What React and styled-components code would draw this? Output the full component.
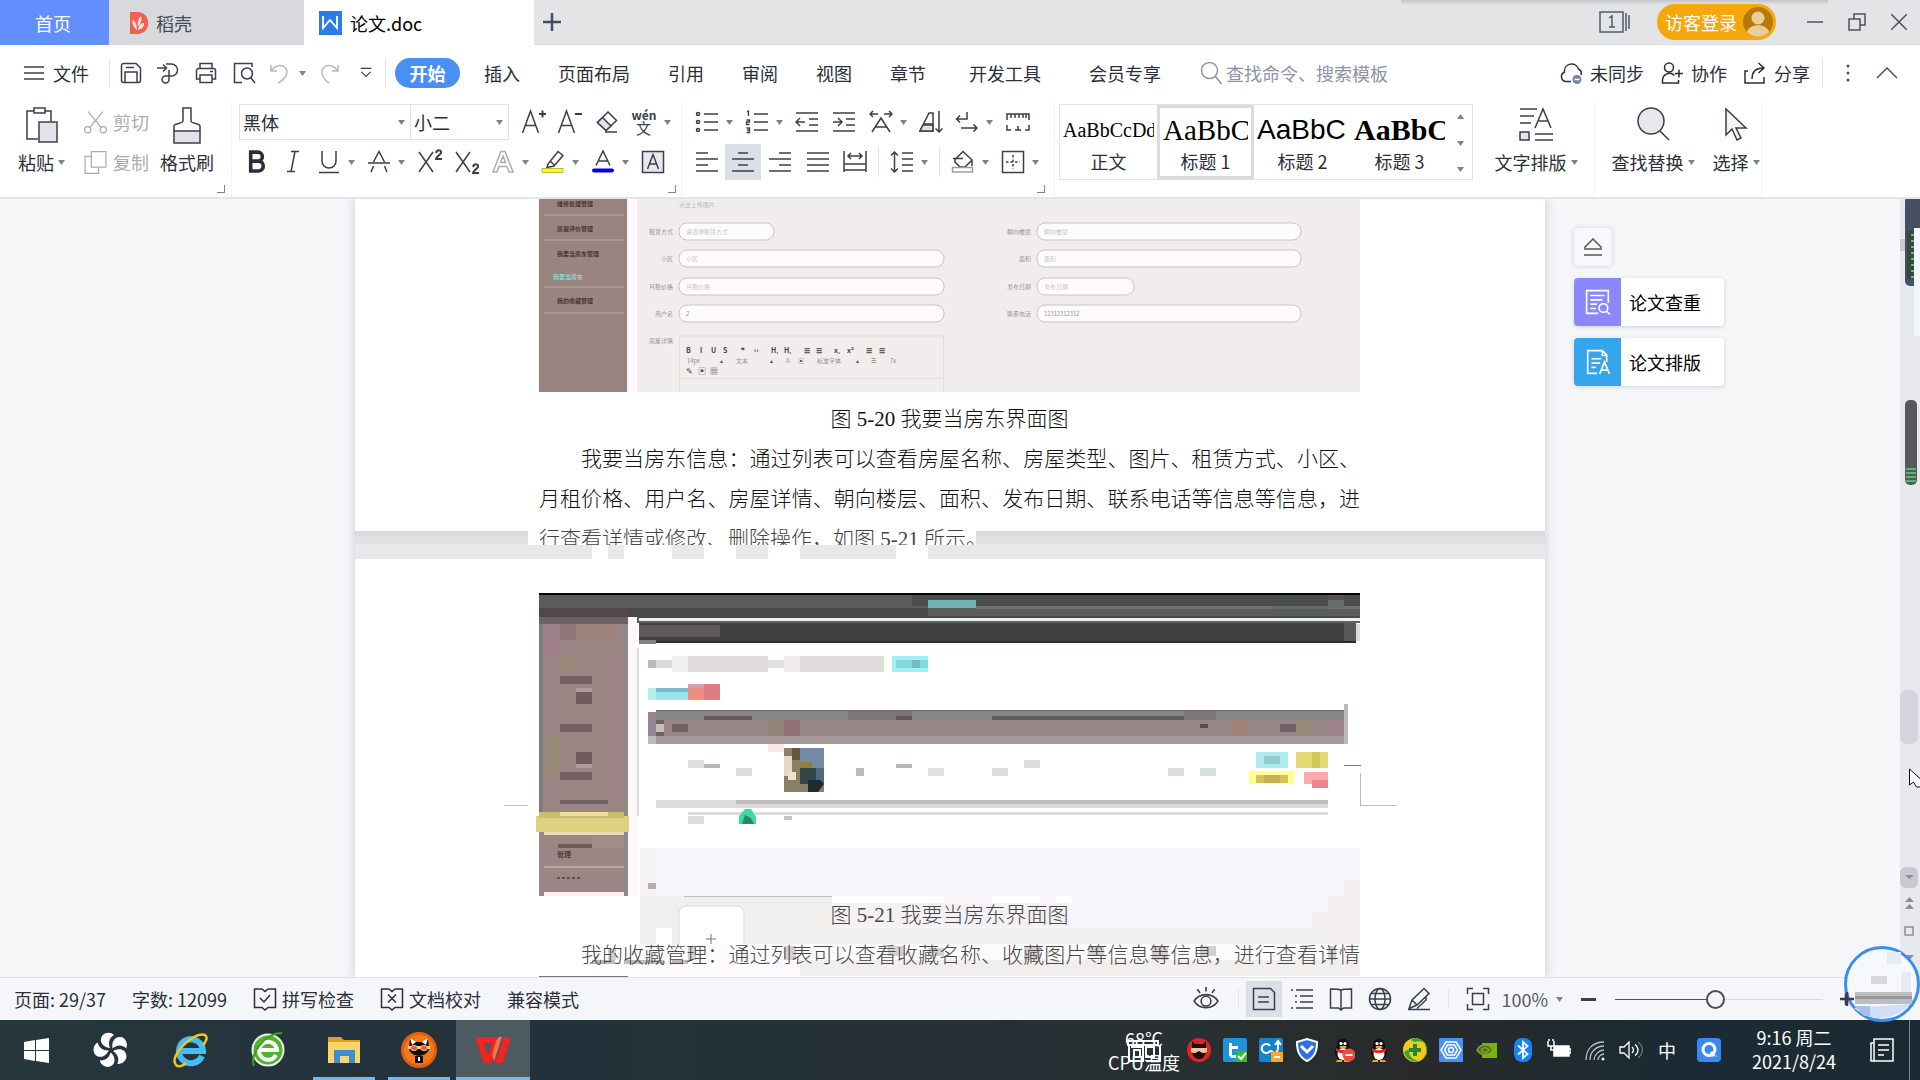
import React, {useState} from "react"
import styled, { createGlobalStyle } from "styled-components";

const Global = createGlobalStyle`
  * { box-sizing: border-box; }
  html, body, #root { height: 100%; }
  body {
    margin: 0;
    overflow: hidden;
    font-family: "Noto Sans CJK SC", "Open Sans", sans-serif;
    font-size: 18px;
    color: #2b2f3a;
  }
  button, input, select {
    font: inherit;
    color: inherit;
    border: 0;
    padding: 0;
    margin: 0;
    background: none;
    outline: none;
  }
  svg { display: block; flex: none; }
`
const Janela = styled.div`
    display: flex;
    flex-direction: column;
    height: 100vh;
    background: #fff;
    line-height: 24px;
    white-space: nowrap;
`

/* title bar */
const TitleBar = styled.header`
    display: flex;
    height: 45px;
    background: #e2e4e6;
    border-bottom: 1px solid #dcdee0;
`
const Tab = styled.button`
    display: flex;
    align-items: center;
    gap: 8px;
    height: 45px;
    padding: 0 0 0 ${p => p.$pad}px;
    width: ${p => p.$w}px;
    background: ${p => p.$bg};
    color: ${p => p.$color || "#20242e"};
`
const NewTab = styled.button`
    display: flex;
    align-items: center;
    padding: 0 9px;
`
const TitleRight = styled.div`
    display: flex;
    align-items: center;
    margin-left: auto;
    height: 44px;
    background: linear-gradient(#c4c5c7, #e2e4e600) 0 0 / 427px 5px no-repeat;
    padding-left: 198px;
`
const Login = styled.button`
    display: flex;
    align-items: center;
    gap: 6px;
    height: 36px;
    padding: 0 3px 0 8px;
    margin: 0 18px 0 27px;
    border-radius: 18px;
    background: #f5a80c;
    color: #fff;
`
const WinButton = styled.button`
    display: flex;
    align-items: center;
    justify-content: center;
    width: 42px;
    height: 44px;
`

/* menu bar */
const MenuBar = styled.nav`
    display: flex;
    align-items: center;
    height: 56px;
    flex: none;
`
const Slot = styled.button`
    display: flex;
    align-items: center;
    justify-content: center;
    gap: 7px;
    width: ${p => p.$w}px;
    height: 36px;
    background: ${p => p.$on ? "#dcdfe6" : "none"};
    color: #3a3f4b;
`
const FileButton = styled.button`
    display: flex;
    align-items: center;
    gap: 9px;
    padding: 0 17px 0 24px;
`
const Line = styled.span`
    width: 1px;
    height: ${p => p.$h || 30}px;
    margin: 0 ${p => p.$m || 0}px;
    background: #e4e6ea;
`
const MenuTab = styled.button`
    padding: 0 ${p => p.$wide ? 24 : 19}px;
`
const ActiveTab = styled.button`
    width: 65px;
    height: 30px;
    margin: 0 5px 0 9px;
    border-radius: 15px;
    background: #4a90f2;
    color: #fff;
    font-weight: bold;
`
const Search = styled.label`
    display: flex;
    align-items: center;
    gap: 3px;
    margin-left: 14px;
    color: #8d93a5;
    input { width: 190px; }
    input::placeholder { color: #8d93a5; opacity: 1; }
`
const MenuRight = styled.div`
    display: flex;
    align-items: center;
    gap: 16px;
    margin-left: auto;
`
const IconText = styled.button`
    display: flex;
    align-items: center;
    gap: ${p => p.$tight ? 5 : 7}px;
`
const MenuEnd = styled.div`
    display: flex;
    align-items: center;
    padding: 0 19px 0 12px;
`

/* ribbon */
const Ribbon = styled.section`
    display: flex;
    flex: none;
    height: 98px;
    padding-top: 1px;
    border-bottom: 2px solid #e4e5e8;
`
const Group = styled.div`
    display: flex;
    flex-direction: column;
    padding: 0 ${p => p.$right || 0}px 0 ${p => p.$left || 0}px;
    border-right: 1px solid #f1f2f4;
`
const Row = styled.div`
    display: flex;
    align-items: center;
    height: 40px;
`
const Launcher = styled.button`
    align-self: flex-end;
    width: 8px;
    height: 8px;
    margin-top: 3px;
    border-right: 1px solid #7d828c;
    border-bottom: 1px solid #7d828c;
`
const BigRow = styled.div`
    display: flex;
    height: 80px;
`
const Big = styled.button`
    display: flex;
    flex-direction: column;
    align-items: center;
    justify-content: space-between;
    width: ${p => p.$w}px;
    height: 72px;
    padding-top: 5px;
`
const BigLabel = styled.span`
    display: flex;
    align-items: center;
    gap: 4px;
`
const Faded = styled.button`
    display: flex;
    align-items: center;
    gap: 5px;
    height: 40px;
    color: #a9acb3;
`
const Combo = styled.span`
    display: flex;
    align-items: center;
    width: ${p => p.$w}px;
    height: 36px;
    padding: 0 5px 0 3px;
    border: 1px solid #dfe1e5;
    border-left-width: ${p => p.$first ? 1 : 0}px;
    select {
        flex: 1;
        appearance: none;
    }
`
const Gallery = styled.div`
    display: flex;
    height: 76px;
    margin: 2px 0 0 4px;
    border: 1px solid #e1e3e7;
`
const StyleCell = styled.button`
    display: flex;
    flex-direction: column;
    justify-content: flex-end;
    align-items: center;
    width: 97px;
    overflow: hidden;
    padding: 0 3px;
    border: 3px solid ${p => p.$on ? "#d9dbdf" : "transparent"};
    border-width: ${p => p.$on ? 3 : 0}px;
    padding-bottom: ${p => p.$on ? 3 : 6}px;
`
const Preview = styled.span`
    align-self: flex-start;
    color: #000;
    font-family: ${p => p.$sans ? '"Liberation Sans"' : '"Liberation Serif"'}, sans-serif;
    font-size: ${p => p.$size}px;
    font-weight: ${p => p.$bold ? "bold" : "normal"};
    line-height: 38px;
    width: 100%;
    overflow: hidden;
    text-align: left;
`
const GalleryArrows = styled.div`
    display: flex;
    flex-direction: column;
    justify-content: space-between;
    align-items: center;
    width: 24px;
    padding: 9px 0 7px;
`

/* document area */
const Workspace = styled.main`
    flex: 1;
    min-height: 0;
    display: grid;
    grid-template-columns: 1fr 1190px 1fr 20px;
    background: #f5f6f8;
    overflow: hidden;
`
const Pages = styled.div`
    grid-column: 2;
    display: flex;
    flex-direction: column;
    min-height: 0;
    box-shadow: 0 0 10px #c9cbd0;
    background: #e5e7e9;
`
const Page = styled.article`
    height: ${p => p.$h ? p.$h + "px" : "auto"};
    flex: ${p => p.$h ? "none" : 1};
    padding: 0 185px 0 184px;
    background: #fff;
    color: #111;
    font-family: "Liberation Serif", "Noto Sans CJK SC", serif;
    font-weight: 300;
    font-size: 21px;
    line-height: 40px;
`
const Gap = styled.div`
    height: 28px;
    flex: none;
    background:
        linear-gradient(#fff, #fff) 237px 14px / 16px 14px no-repeat,
        linear-gradient(#fff, #fff) 269px 14px / 48px 14px no-repeat,
        linear-gradient(#fff, #fff) 349px 14px / 32px 14px no-repeat,
        linear-gradient(#fff, #fff) 413px 14px / 32px 14px no-repeat,
        linear-gradient(#fff, #fff) 541px 14px / 32px 14px no-repeat,
        linear-gradient(#d9dadd 0 5px, #dfe1e3 5px 13px, #e6e8ea 13px);
`
const Caption = styled.p`
    margin: 0;
    padding-top: ${p => p.$top || 0}px;
    text-align: center;
`
const Body = styled.p`
    margin: 0;
    text-indent: ${p => p.$indent ? 42 : 0}px;
    text-align: justify;
    text-align-last: justify;
`
const CutLine = styled.p`
    position: relative;
    margin: 0 0 0 -11px;
    padding-left: 11px;
    width: 448px;
    height: 26px;
    overflow: hidden;
    background: #fff;
    color: #444;
`
const Stack = styled.div`
    display: grid;
    > * { grid-area: 1 / 1; }
    > svg { overflow: visible; }
`
const Overlap = styled.div`
    padding-top: 336px;
    color: #4b4747;
`
const Patch = styled.span`
    background: #f3f1f3;
`
const Side = styled.aside`
    display: flex;
    flex-direction: column;
    align-items: flex-start;
    gap: 12px;
    padding: 29px 0 0 29px;
`
const Collapse = styled.button`
    display: flex;
    align-items: center;
    justify-content: center;
    width: 38px;
    height: 38px;
    background: #f7f8fa;
    border-radius: 4px;
    box-shadow: 0 0 4px #cfd1d5;
`
const SideCard = styled.button`
    display: flex;
    align-items: center;
    width: 150px;
    height: 48px;
    border-radius: 4px;
    overflow: hidden;
    background: #fff;
    color: #000;
    gap: 8px;
    box-shadow: 0 1px 4px #cfd1d5;
`
const SideIcon = styled.span`
    display: flex;
    align-items: center;
    justify-content: center;
    width: 47px;
    height: 48px;
    background: ${p => p.$bg};
`
const Track = styled.div`
    grid-column: 4;
    background: #e8e9ef;
    overflow: hidden;
`

/* status bar */
const Status = styled.footer`
    display: flex;
    align-items: center;
    flex: none;
    height: 43px;
    border-top: 1px solid #dfe2e6;
    background: #f5f6fa;
    gap: 26px;
    padding-left: 14px;
`
const StatusRight = styled.div`
    display: flex;
    align-items: center;
    margin-left: auto;
    padding-right: 68px;
`
const Zoom = styled.input`
    appearance: none;
    width: 208px;
    height: 20px;
    margin: 0 17px 0 2px;
    background: linear-gradient(90deg, #4a4f5a 48%, #d5d8dd 48%) 0 10px / 100% 1px no-repeat;
    &::-webkit-slider-thumb {
        appearance: none;
        width: 19px;
        height: 19px;
        border: 2px solid #4a4f5a;
        border-radius: 50%;
        background: #f3f4f6;
    }
`
const Percent = styled.span`
    color: #555a6b;
    margin: 0 8px 0 4px;
`
const FloatBall = styled.div`
    position: absolute;
    right: 0;
    bottom: 58px;
`

/* taskbar */
const Taskbar = styled.footer`
    display: flex;
    flex: none;
    height: 60px;
    background: linear-gradient(90deg, #26363d, #23323a 30%, #283032 62%, #282a2a 74%, #1c2b33 86%);
    color: #fff;
`
const Task = styled.button`
    display: flex;
    align-items: center;
    justify-content: center;
    width: ${p => p.$w}px;
    background: ${p => p.$on ? "#4d5a61" : "none"};
    background-image: ${p => p.$open ? "linear-gradient(#78b7ea, #78b7ea)" : "none"};
    background-size: ${p => p.$on ? "100%" : "62px"} 3px;
    background-position: bottom;
    background-repeat: no-repeat;
`
const Tray = styled.div`
    display: flex;
    align-items: stretch;
    margin-left: auto;
`
const Temp = styled.button`
    display: grid;
    width: 74px;
    justify-items: center;
    align-items: center;
    color: #fff;
    > * { grid-area: 1 / 1; }
`
const Clock = styled.button`
    width: 122px;
    color: #fff;
    line-height: 24px;
    padding-bottom: 2px;
`
const Edge = styled.span`
    width: 11px;
    border-left: 1px solid #7d878c;
`

const Icon = ({ s = 24, w = 1.5, c = "currentColor", children }) => (
    <svg width={s} height={s} viewBox="0 0 24 24" fill="none" stroke={c} strokeWidth={w} aria-hidden="true">
        {children}
    </svg>
)
const Caret = ({ up }) => (
    <svg width="7" height="5" viewBox="0 0 7 5" aria-hidden="true">
        <path d={up ? "M0 5h7L3.500 0z" : "M0 0h7L3.500 5z"} fill="#7d828c" />
    </svg>
)

const ic = {
    save: <Icon><path d="M2.500 4.500a2 2 0 0 1 2-2H17l4.500 4.500v12.500a2 2 0 0 1-2 2h-15a2 2 0 0 1-2-2zM6 21.500V11h12v10.500M7 6.500h8" /></Icon>,
    output: <Icon><path d="M1 7h9M7 3.500 10.500 7 7 10.500M10 3h5.500a6 6 0 0 1 0 12H9.500a3.500 3.500 0 1 0 3.500 3.500V9" /></Icon>,
    print: <Icon><path d="M6 7V2.500h12V7M6 18H2.500V9.500a2 2 0 0 1 2-2h15a2 2 0 0 1 2 2V18H18M6 14h12v7.500H6zM16 10.500h3" /></Icon>,
    preview: <Icon><path d="M10 21.500H2.500v-19H20V6M19 17l4 5" /><circle cx="15" cy="12.500" r="5.500" /></Icon>,
    undo: <Icon c="#b5b8be"><path d="M3 4v6h6M3.500 10C6 5 13 2.500 17 6.500S19 17 10 22" /></Icon>,
    redo: <Icon c="#b5b8be"><path d="M21 4v6h-6M20.500 10C18 5 11 2.500 7 6.500S5 17 12 22" /></Icon>,
    more: <Icon s={14} w={2}><path d="M3 4h18M4 10l8 8 8-8" /></Icon>,
    cut: <Icon s={25} w={1.2}><path d="M5 1.500 17.500 17M19 1.500 6.500 17" /><circle cx="4.500" cy="19" r="3" /><circle cx="19.500" cy="19" r="3" /></Icon>,
    copy: <Icon s={25} w={1.2}><path d="M8 1.500h14v15H8z" /><path d="M8 6H2v16.500h13v-6" /></Icon>,
    eraser: <Icon><path d="M2.500 12.500 13 2l8.500 8.500L11 20.500z" fill="#fff" /><path d="M2.500 12.500 7.500 7.500l8.500 8.500-5 4.500z" fill="#e1e3e8" /><path d="M10 22h12" /></Icon>,
    bullets: <Icon><path d="M9 4h14M9 12h14M9 20h14" /><circle cx="3" cy="4" r="1.500" /><circle cx="3" cy="12" r="1.500" /><circle cx="3" cy="20" r="1.500" /></Icon>,
    numbers: <Icon><path d="M9 4h14M9 12h14M9 20h14" /><path d="M2 2l1.500-1v5M1.500 10h3v2h-3v2.500h3M1.500 18h3v4.500h-3M2 20h2.500" strokeWidth="1.300" /></Icon>,
    outdent: <Icon><path d="M1 3h22M14 9h9M14 15h9M1 21h22M1 12h9M5 8l-4 4 4 4" /></Icon>,
    indent: <Icon><path d="M1 3h22M14 9h9M14 15h9M1 21h22M1 12h9M6 8l4 4-4 4" /></Icon>,
    scale: <Icon><path d="M1 4h8M4 1 1 4l3 3M15 4h8M20 1l3 3-3 3M3 22l9-14 9 14M6.500 17h11" /></Icon>,
    sort: <Icon><path d="M1 21 10 3h4v18zM5 14h9" /><path d="M4 15h10v6H1z" fill="#e1e3e8" /><path d="M20 1v21M16.500 18.500 20 22l3.500-3.500" /></Icon>,
    wrap: <Icon><path d="M12 2v7H2M5 5.500 1.500 9 5 12.500M6 18h16M18.500 14.500 22 18l-3.500 3.500" /></Icon>,
    ruler: <Icon><path d="M1 10V4h22v6M5 4v4M9 4v4M13 4v4M17 4v4M20 4v4M1 15v5h4M23 15v5h-4M9 20h6M12 16v4" /></Icon>,
    left: <Icon><path d="M1 3h12M1 9h22M1 15h12M1 21h22" /></Icon>,
    center: <Icon><path d="M7 3h10M1 9h22M7 15h10M1 21h22" /></Icon>,
    right: <Icon><path d="M11 3h12M1 9h22M11 15h12M1 21h22" /></Icon>,
    justify: <Icon><path d="M1 3h22M1 9h22M1 15h22M1 21h22" /></Icon>,
    distribute: <Icon><path d="M1 1v21M23 1v21M5 6h14M8 3 5 6l3 3M16 3l3 3-3 3M1 14h22M1 20h22" /></Icon>,
    spacing: <Icon><path d="M4.500 2v20M1 5.500 4.500 2 8 5.500M1 18.500 4.500 22 8 18.500M12 3h11M12 9h11M12 15h11M12 21h11" /></Icon>,
    bucket: <Icon><path d="M4 9.500 12 1.500l9 8.500-7 7H9l-5-5zM2 8.500h10M21 10v6" /><path d="M1.500 17.500h20v4.500h-20z" stroke="#a79a9a" /></Icon>,
    border: <Icon><path d="M1.500 1.500h21v21h-21z" /><path d="M12 5v14M5 12h14" strokeDasharray="2.500 2" /></Icon>,
    under: <Icon><path d="M5 1v10a7 7 0 0 0 14 0V1M2 22.500h20" /></Icon>,
    italic: <Icon><path d="M10 1.500h8M6 21.500h8M14 1.500 10 21.500" /></Icon>,
    strike: <Icon><path d="M6.500 12 12 1.500 17.500 12M1 13h22M4 22l2.500-6M20 22l-2.500-6" /></Icon>,
    outline: <Icon c="#a9acb3"><path d="M2 22 10 1.500h4L22 22h-4l-2-5.500H8L6 22zM9.500 12.500h5L12 6z" /></Icon>,
    marker: <Icon><path d="M7 14 17 1.500l5 4L13 16l-7 1.500zM9 11l5 4.500" /><path d="M1 18.500h21v4H1z" fill="#ffff00" stroke="#a6a64a" strokeWidth=".8" /></Icon>,
    color: <Icon><path d="M5 15.500 12 1l7 14.500M7.500 11h9" /><path d="M3 20.500h18" stroke="#0000ee" strokeWidth="4" strokeLinecap="round" /></Icon>,
    boxed: <Icon><path d="M1.500 1.500h21v21h-21z" fill="#e6e8ec" /><path d="M6.500 19 12 4.500 17.500 19M8.500 14h7" /></Icon>,
    search: <Icon><circle cx="10.500" cy="9.500" r="8" /><path d="M16.500 15.500 22.500 23" /></Icon>,
    cloud: <Icon><path d="M12 20.500H6.500a5 5 0 0 1-1-9.500C4.500 2 17 0 19.500 8a5 5 0 0 1 2.500 6" /><circle cx="18" cy="18.500" r="4.500" fill="#7584a3" stroke="none" /><path d="M15.500 18.500h5" stroke="#fff" /></Icon>,
    person: <Icon><circle cx="9" cy="6.500" r="4.500" /><path d="M14.500 14.500A7 7 0 0 0 2.500 19v3h16v-3M19 8.500v8M15 12.500h8" /></Icon>,
    share: <Icon><path d="M9 18C9 10 13 7 20 7M15.500 2l5.500 5-5.500 5M5 10H2v12h19v-6" /></Icon>,
    eye: <Icon s={26}><path d="M1 14c5-8 17-8 22 0-5 8-17 8-22 0zM12 1v4M4 3l2.500 3.500M20 3l-2.500 3.500" /><circle cx="12" cy="14" r="4.500" /></Icon>,
    pageView: <Icon><path d="M1.500 1.500h17l4 4v17h-21zM6 10h11M6 15h11" /></Icon>,
    outlineView: <Icon><path d="M1 3h2M6 3h17M5 9h2M10 9h13M5 15h2M10 15h13M1 21h2M6 21h17" /></Icon>,
    book: <Icon><path d="M12 3.500C11 2 9 2 1.500 2v19h8l2.500 2 2.500-2h8V2C15 2 13 2 12 3.500zM12 4v18" /></Icon>,
    globe: <Icon><circle cx="12" cy="12" r="10.500" /><ellipse cx="12" cy="12" rx="5" ry="10.500" /><path d="M1.500 12h21M3.500 6.500h17M3.500 17.500h17" /></Icon>,
    pen: <Icon><path d="M2 21.500 5 13 17 1.500l5 5L10 18zM5 13l5 5M19 9v4l-9 8.500M1 22.500h22" /></Icon>,
    fit: <Icon><path d="M1.500 7V1.500H7M17 1.500h5.500V7M22.500 17v5.500H17M7 22.500H1.500V17M6.500 6.500h11v11h-11z" /></Icon>,
    spell: <Icon><path d="M9 2H1.500v18.500H9l3 2.500 3-2.500h7.500V2H15l-3 2.500zM7 11l4 4 6-7" /></Icon>,
    proof: <Icon><path d="M9 2H1.500v18.500H9l3 2.500 3-2.500h7.500V2H15l-3 2.500zM8 7.500l8 8M16 7.500l-8 8" /></Icon>,
}

// tools drawn as a big letter with a small mark at its corner
const LetterIcon = ({ d, mark }) => (
    <svg width="26" height="26" viewBox="0 0 26 26" fill="none" stroke="currentColor" strokeWidth="1.500" aria-hidden="true">
        <path d={d} /><path d={mark} strokeWidth="2" />
    </svg>
)
const bigA = "M1.500 24 9.500 2l8 22M4.500 16.500h10"
const bigX = "M2 3l14 20M16 3 2 23"

const Tool = ({ icon, w = 36, caret, on, label }) => (
    <Slot $w={w} $on={on} aria-label={label}>{icon}{caret && <Caret />}</Slot>
)

const campos = [
    ["租赁方式", 32, 134, 140, 95, "请选择租赁方式"],
    ["小区", 59, 134, 140, 265, "小区"],
    ["月租价格", 87, 134, 140, 265, "月租价格"],
    ["用户名", 114, 134, 140, 265, "2"],
    ["朝向楼层", 32, 492, 498, 264, "朝向楼层"],
    ["面积", 59, 492, 498, 264, "面积"],
    ["发布日期", 87, 492, 498, 97, "发布日期"],
    ["联系电话", 114, 492, 498, 264, "12312312312"],
]
const menu = [["维修处理管理", 7], ["房屋评价管理", 32], ["我要当房东管理", 57], ["我要当房东", 80], ["我的收藏管理", 104]]

function FormFigure() {
    return (
        <svg width="821" height="193" viewBox="0 0 821 193" fontFamily="Noto Sans CJK SC">
            <path d="M0 0h821v193H0z" fill="#f1eded" />
            <path d="M0 0h88v193H0z" fill="#998480" />
            <path d="M89 0h9v193h-9z" fill="#fbfbfd" />
            <path d="M5 16h80M5 41h80M5 88h80M5 114h80" stroke="#b7a5a2" />
            {menu.map(([t, y]) => (
                <text key={t} x={t === "我要当房东" ? 14 : 18} y={y} fontSize="6" fontWeight="bold" fill={t === "我要当房东" ? "#8ed3d3" : "#4a3735"}>{t}</text>
            ))}
            <text x="140" y="8" fontSize="6" fill="#999">点击上传图片</text>
            {campos.map(([t, y, end, x, w, v]) => (
                <g key={t} fontSize="6">
                    <text x={end} y={y + 3} textAnchor="end" fill="#666">{t}</text>
                    <rect x={x} y={y - 8} width={w} height="17" rx="8" fill="#fdfbfc" stroke="#c9c5c5" />
                    <text x={x + 7} y={y + 3} fill={/\d/.test(v) ? "#555" : "#aaa"}>{v}</text>
                </g>
            ))}
            <text x="134" y="144" fontSize="6" textAnchor="end" fill="#666">房屋详情</text>
            <path d="M140.500 193v-56h264v56M140 179.500h264" stroke="#e4dfdf" fill="none" />
            <g fontSize="7" fontWeight="bold" fill="#444">
                {[["B", 147], ["I", 161], ["U", 172], ["S", 184], ["❞", 202], ["‹›", 215], ["H₁", 232], ["H₂", 245], ["☰", 265], ["☰", 277], ["x₂", 295], ["x²", 308], ["☰", 327], ["☰", 340]].map(([t, x]) => <text key={x} x={x} y="154">{t}</text>)}
            </g>
            <g fontSize="6" fill="#555">
                {[["14px", 148], ["▴", 181], ["文本", 197], ["▴", 231], ["A", 247], ["▣", 259], ["标准字体", 278], ["▴", 317], ["☰", 332], ["Tx", 351]].map(([t, x]) => <text key={x} x={x} y="164">{t}</text>)}
            </g>
            <g fontSize="8" fill="#444"><text x="147" y="175">✎</text><text x="159" y="175">▣</text><text x="171" y="175">▦</text></g>
        </svg>
    )
}

// [x, y, width, height, fill]
const blocos = [
    [0, 34, 821, 30, "#5c5c5c"], [0, 34, 821, 2, "#050505"], [373, 36, 448, 11, "#4b4d4b"], [0, 49, 389, 9, "#4b4848"], [437, 47, 384, 3, "#727272"],
    [389, 41, 48, 8, "#70b3b0"], [733, 47, 56, 3, "#62706a"], [789, 41, 16, 8, "#62706a"], [789, 36, 16, 5, "#604f52"],
    [5, 49, 84, 9, "#52474a"], [0, 58, 89, 7, "#6b6263"], [100, 57, 721, 2, "#4a4a4a"], [100, 59, 721, 3, "#edf1f0"], [100, 62, 721, 2, "#5c6563"],
    [100, 64, 717, 19, "#423f40"], [100, 82, 717, 2, "#2e2b2c"], [100, 66, 81, 12, "#5f5a5c"], [805, 64, 12, 18, "#595758"], [817, 65, 4, 17, "#dcdada"], [100, 81, 17, 4, "#828080"],
    [0, 65, 89, 272, "#9b8585"], [0, 65, 4, 188, "#7c7b7b"], [85, 65, 4, 272, "#8c8a89"], [89, 58, 9, 279, "#fcf8fa"], [98, 89, 2, 168, "#d7ddd7"],
    [21, 65, 16, 16, "#8f7479"], [37, 65, 40, 16, "#9d837b"], [5, 65, 16, 32, "#9f8088"], [21, 97, 16, 16, "#98887a"], [5, 177, 16, 40, "#998979"], [69, 97, 16, 144, "#a18487"],
    [21, 117, 32, 8, "#735f60"], [37, 129, 16, 4, "#b09b9b"], [37, 133, 16, 12, "#6f5c5c"], [21, 165, 32, 8, "#78626a"], [37, 193, 16, 12, "#6f5c5c"], [37, 205, 16, 4, "#b09b9b"], [21, 213, 32, 8, "#735f60"], [21, 241, 48, 4, "#6f6064"],
    [-3, 257, 93, 16, "#ddd27d"], [0, 253, 85, 6, "#c9bd71"], [21, 253, 48, 4, "#ece0a0"], [5, 273, 80, 3, "#e8dcb0"], [19, 285, 34, 4, "#6f5955"], [53, 277, 32, 12, "#a58e8a"], [5, 307, 80, 2, "#bda7a3"], [5, 333, 80, 4, "#fff1ee"],
    [109, 101, 8, 8, "#bdb8b9"], [117, 101, 16, 8, "#dcd8d8"], [133, 97, 16, 16, "#f1efef"], [149, 97, 80, 16, "#e0dbdd"], [229, 101, 16, 8, "#e4dfe0"], [245, 97, 16, 16, "#f1eced"], [261, 97, 80, 16, "#e0dbdd"], [341, 97, 4, 16, "#d4e4d2"],
    [353, 97, 36, 16, "#a0f2f4"], [357, 101, 32, 8, "#83d7de"], [373, 101, 8, 8, "#76b9c4"],
    [109, 129, 8, 12, "#b5eee9"], [117, 129, 32, 12, "#9ce2e9"], [117, 129, 32, 4, "#76bdc6"], [149, 125, 32, 16, "#ee8d82"], [165, 125, 16, 16, "#dd7e82"], [149, 125, 16, 4, "#d3a0b0"],
    [109, 153, 8, 24, "#978796"], [109, 177, 8, 8, "#bdbaba"], [117, 151, 688, 34, "#998788"], [117, 151, 688, 10, "#898687"], [117, 151, 688, 1, "#6c6969"], [117, 177, 688, 8, "#a69999"], [805, 145, 4, 40, "#bdb8bb"],
    [165, 157, 48, 4, "#685a58"], [309, 152, 64, 9, "#7c7677"], [357, 157, 16, 4, "#5f5759"], [453, 157, 192, 4, "#625d5d"], [645, 152, 32, 9, "#7f787a"],
    [117, 161, 8, 16, "#6c5e61"], [117, 165, 8, 8, "#c9bcbe"], [133, 165, 16, 8, "#70635d"], [229, 161, 16, 16, "#958579"], [245, 161, 16, 16, "#917176"], [661, 165, 8, 4, "#62474d"], [693, 161, 16, 16, "#a18175"], [741, 165, 16, 8, "#71646a"], [757, 161, 16, 16, "#988977"], [789, 161, 16, 16, "#9f818b"],
    [229, 185, 16, 8, "#f8ebe6"], [149, 201, 16, 8, "#dcdfdb"], [165, 205, 16, 4, "#bdb3b8"], [197, 209, 16, 8, "#dcdcdc"], [317, 209, 8, 8, "#bbbac2"], [357, 205, 16, 4, "#bdb3b8"], [389, 209, 16, 8, "#e0e0e0"], [453, 209, 16, 8, "#dcdcdc"], [485, 201, 16, 8, "#dadfdb"], [629, 209, 16, 8, "#e0dbdd"], [661, 209, 16, 8, "#d3e3dc"],
    [717, 193, 32, 16, "#afeaef"], [725, 197, 16, 8, "#91cbd0"], [757, 193, 32, 16, "#e3d974"], [773, 193, 8, 16, "#d0c65b"], [710, 212, 45, 13, "#ffff91"], [717, 216, 32, 8, "#cdc557"], [725, 216, 16, 8, "#c9ae59"], [765, 213, 24, 12, "#fba9ae"], [773, 221, 16, 8, "#e8848e"],
    [117, 241, 32, 8, "#dddcdd"], [149, 241, 640, 8, "#dddcdd"], [197, 241, 592, 4, "#bdbcbf"], [149, 253, 640, 3, "#dddbdd"], [149, 257, 16, 8, "#dddddd"], [245, 257, 8, 4, "#c5c3c4"],
    [101, 289, 720, 128, "#f7f5f9"], [101, 289, 16, 48, "#f4f2f3"], [101, 337, 192, 80, "#f1eeee"], [293, 369, 528, 48, "#f1eeee"], [805, 321, 16, 50, "#f1eeed"], [789, 337, 16, 40, "#f1eeed"], [773, 353, 16, 16, "#f1eeed"],
    [109, 324, 8, 6, "#b5aeb0"], [145, 337, 148, 1, "#c2bfbf"], [117, 369, 16, 16, "#fff"],
]

function GlitchFigure() {
    return (
        <svg width="821" height="418" viewBox="0 0 821 418">
            {blocos.map(([x, y, w, h, f], i) => <rect key={i} x={x} y={y} width={w} height={h} fill={f} />)}
            <g fill="#4b3b3a" fontSize="7" fontWeight="bold" fontFamily="Noto Sans CJK SC"><text x="18" y="298">管理</text></g>
            <path d="M18 319h23" stroke="#66504e" strokeDasharray="3 2" strokeWidth="2" />
            {/* room photo */}
            <path d="M245 189h40v44h-40z" fill="#8b8065" /><path d="M261 189h24v20h-24z" fill="#748ba6" /><path d="M245 197h8v20h-8z" fill="#e6d8c6" /><path d="M253 189h8v12h-8z" fill="#655440" />
            <path d="M249 213h8v8h-8z" fill="#f1e4c3" /><path d="M261 209h16v16h-16z" fill="#33454a" /><path d="M277 209h8v16h-8z" fill="#496985" /><path d="M269 221h12l4 4-6 8h-10z" fill="#202a33" /><path d="M261 203h12v6h-12z" fill="#927e42" />
            <path d="M200 265v-8l6-7h6l5 8v7z" fill="#3bdca0" /><path d="M203 265l3-9 6 3 3 6z" fill="#278a62" />
            <rect x="140" y="347" width="65" height="60" rx="7" fill="#fff" stroke="#dedada" />
            <path d="M172 375v10M167 380h10" stroke="#777" />
            <path d="M101 385h720v16H101z" fill="#fdfcfd" /><path d="M101 401h160v16H101z" fill="#fdfbfd" />
            <path d="M293 337h112v8H293zM453 337h48v8h-48zM517 337h16v8h-16z" fill="#fff" />
            <path d="M373 345h32v8h-32zM421 345h80v8h-80zM485 345h32v10h-32z" fill="#dedbdd" />
            <path d="M53 401h23v4H53zM85 401h40v4H85zM133 401h16v4h-16z" fill="#bdbbbd" />
            <path d="M69 389h8v12h-8zM149 387h8v14h-8zM245 387h12v14h-12zM349 387h16v10h-16zM389 389h16v8h-16zM485 387h16v14h-16zM549 387h16v10h-16zM613 387h16v14h-16zM661 387h16v10h-16zM789 387h8v14h-8z" fill="#d3d0d2" />
            <path d="M0 417.500h89" stroke="#777" />
            <path d="M-35 246.500h24M821 246.500h36M821.500 214v32" stroke="#bbb" /><path d="M805 206.500h17" stroke="#777" />
        </svg>
    )
}

function ScrollDrawing() {
    return (
        <svg width="20" height="778" viewBox="0 0 20 778">
            <rect x="5" y="-3" width="19" height="90" rx="5" fill="#474f62" />
            <path d="M7 32h7v48H7z" fill="#38483f" />
            {[36, 42, 48, 54, 60, 66, 72, 78].map(y => <path key={y} d={`M11 ${y}h3`} stroke="#69b879" strokeWidth="2" />)}
            <path d="M14 29h6v108h-6z" fill="#f1f7fd" />
            <path d="M0 40h5v12H0z" fill="#c8cad0" />
            <rect x="5" y="201" width="12" height="85" rx="5" fill="#58595b" />
            <path d="M6 270h10M6 274h10M6 278h10M6 282h10" stroke="#54b970" strokeWidth="2" />
            <rect x="0" y="491" width="18" height="54" rx="7" fill="#d3d4dc" />
            <path d="M9.500 570v16l4-3 3 5h4v-8z" fill="#fff" stroke="#111" />
            <rect x="0" y="668" width="18" height="21" rx="6" fill="#c8c9d0" />
            <path d="M5 676h9l-4.500 4zM5 703h9l-4.500-5zM5 710h9l-4.500-5zM5 756h9l-4.500 5z" fill="#8c8f98" />
            <rect x="5" y="728" width="8" height="8" fill="none" stroke="#8c8f98" strokeWidth="1.500" />
        </svg>
    )
}

const Penguin = ({ busy }) => (
    <Icon c="none" w={0}>
        <ellipse cx="12" cy="14" rx="8" ry="8" fill="#111" /><ellipse cx="12" cy="7.500" rx="6" ry="7" fill="#111" />
        <ellipse cx="12" cy="16" rx="5.500" ry="6" fill="#fff" /><path d="M5 10c4 3 10 3 14 0v3c-4 3-10 3-14 0z" fill="#e32727" />
        <circle cx="10" cy="5.500" r="1.600" fill="#fff" /><circle cx="14" cy="5.500" r="1.600" fill="#fff" /><ellipse cx="12" cy="9" rx="3.500" ry="1.300" fill="#f5a60c" /><path d="M6 22h5v2H5zM13 22h5l1 2h-6z" fill="#f5a60c" />
        {busy && <g><circle cx="18" cy="17" r="6.500" fill="#ee4b45" /><path d="M14.500 16h7v2h-7z" fill="#fff" /></g>}
    </Icon>
)
const bandeja = [
    <Icon w={0}><circle cx="12" cy="12" r="12" fill="#e02424" /><path d="M5 3l3 3h8l3-3v10a7 8 0 0 1-14 0z" fill="#16100f" /><path d="M4 10h16v4c-3 2-5 1-8-1-3 2-5 3-8 1z" fill="#f5c59a" /></Icon>,
    <Icon w={0}><rect width="24" height="24" rx="2" fill="#1d93d8" /><path d="M6 5h3v3h6v3H9v6h5v3H8l-2-3z" fill="#fff" /><path d="M13 13h11v11H13z" fill="#3cb73d" /><path d="M15 18l3 3 5-6" stroke="#fff" strokeWidth="2" fill="none" /></Icon>,
    <Icon w={2}><rect width="24" height="24" rx="2" fill="#1684ca" stroke="none" /><path d="M11 8a4.500 4.500 0 1 0-1 6c3-3 3 1 5 1s4-2 4-5V4M16 7l3-4 3 4" stroke="#fff" /><path d="M12 14h12v10H12z" fill="#f6a82b" stroke="none" /><path d="M15 19h6" stroke="#fff" /></Icon>,
    <Icon w={2}><path d="M12 1l10 3c0 9-2 15-10 19C4 19 2 13 2 4z" fill="#2f6fe4" stroke="#fff" /><path d="M6 8l6 6 6-6" stroke="#fff" strokeWidth="3" /></Icon>,
    <Penguin busy />,
    <Penguin />,
    <Icon w={0}><circle cx="12" cy="12" r="12" fill="#f3ca1c" /><path d="M12 0a12 12 0 0 1 7 21 9 9 0 0 0-7-17C7 2 6 2 12 0zM1 14a12 12 0 0 0 15 9c-6-1-11-5-10-12z" fill="#35a83d" /><path d="M10 6h4v4h4v4h-4v4h-4v-4H6v-4h4z" fill="#218838" /></Icon>,
    <Icon w={1.5}><rect width="24" height="24" rx="1" fill="#4a92f0" stroke="none" /><path d="M7 4h10l5 8-5 8H7l-5-8z" stroke="#fff" /><path d="M8.500 7h7l3 5-3 5h-7l-3-5z" stroke="#fff" /><circle cx="12" cy="12" r="2.500" stroke="#fff" /></Icon>,
    <Icon w={1.5}><path d="M7 5h15v15H7z" fill="#78b500" stroke="none" /><path d="M2 12c4-7 12-6 16 0-4 6-12 6-16 0zM6 12c2-3 6-3 8 0-2 3-6 3-8 0" fill="#4a7308" stroke="#7fa632" /></Icon>,
    <Icon w={1.8}><rect x="3" y="0" width="18" height="24" rx="8" fill="#1583f0" stroke="none" /><path d="M7 7.500 16.500 16 12 20V4l4.500 4L7 16.500" stroke="#fff" /></Icon>,
    <Icon w={1.5} c="#fff"><path d="M7 8h15v10H7z" fill="#fff" /><path d="M22 11h2v4h-2M1 3v5h6V3M2 1v2M6 1v2M4 8v4h3" /></Icon>,
    <Icon w={1.3}><path d="M3 22C3 11 10 4 21 4M7 22c0-8 6-14 14-14M11 22c0-5 5-10 10-10M15 22c0-3 3-6 6-6" stroke="#b9c0c4" /><circle cx="20" cy="21" r="1.500" fill="#fff" stroke="none" /></Icon>,
    <Icon w={1.3} c="#fff"><path d="M1 9h4l5-5v16l-5-5H1z" /><path d="M13 9c2 2 2 4 0 6M16 6.500c4 3 4 8 0 11" /><path d="M19 4c6 5 6 11 0 16" stroke="#6d767b" /></Icon>,
    <span>中</span>,
]

function App() {
    const [zoom, setZoom] = useState(48)
    return (
        <Janela>
            <Global />
            <TitleBar>
                <Tab $w={109} $pad={35} $bg="#628ffb" $color="#fff">首页</Tab>
                <Tab $w={195} $pad={20} $bg="#d8d9dc" $color="#444956">
                    <svg width="19" height="24" viewBox="0 0 19 24"><path d="M1 1h7c15 0 15 22 0 22H1z" fill="#f4604f" /><path d="M8 19C3 15 3 11 4 9c2 1 4 4 4 10zm1-4c-1-4 1-8 3-10 1 4 0 8-3 10zm0 4c0-4 3-7 6-7 0 4-2 6-6 7z" fill="#ffe3da" /></svg>
                    稻壳
                </Tab>
                <Tab $w={230} $pad={15} $bg="#fff" $color="#000">
                    <svg width="23" height="24" viewBox="0 0 23 24"><path d="M0 0h23v24H0z" fill="#2d7be8" /><path d="M4 5v12l7-8 7 8V5" stroke="#fff" strokeWidth="1.800" fill="none" /></svg>
                    论文.doc
                </Tab>
                <NewTab aria-label="新建"><svg width="18" height="18" viewBox="0 0 18 18"><path d="M9 0v18M0 9h18" stroke="#474c66" strokeWidth="2.500" /></svg></NewTab>
                <TitleRight>
                    <svg width="31" height="22" viewBox="0 0 31 22" fill="none" stroke="#545a70" strokeWidth="1.500"><path d="M1 1h23v20H1zM27 2v18M30 4v14M10 7l3-2v11M10 16h6" /></svg>
                    <Login>访客登录
                        <svg width="30" height="30" viewBox="0 0 30 30"><circle cx="15" cy="15" r="15" fill="#b9780a" /><circle cx="15" cy="11" r="6.500" fill="#e8cf9a" /><path d="M4 25c2-9 20-9 22 0a15 15 0 0 1-22 0z" fill="#e8cf9a" /></svg>
                    </Login>
                    <WinButton aria-label="最小化"><svg width="16" height="16" viewBox="0 0 16 16"><path d="M0 8h16" stroke="#4d5263" strokeWidth="1.500" /></svg></WinButton>
                    <WinButton aria-label="还原"><svg width="18" height="18" viewBox="0 0 18 18" fill="none" stroke="#4d5263" strokeWidth="1.500"><path d="M1 6h11v11H1zM6 6V1h11v11h-5" /></svg></WinButton>
                    <WinButton aria-label="关闭"><svg width="16" height="16" viewBox="0 0 16 16"><path d="M0 0l16 16M16 0L0 16" stroke="#4d5263" strokeWidth="1.500" /></svg></WinButton>
                </TitleRight>
            </TitleBar>

            <MenuBar>
                <FileButton><svg width="20" height="14" viewBox="0 0 20 14"><path d="M0 1h20M0 7h20M0 13h20" stroke="#3a3f4b" strokeWidth="1.500" /></svg>文件</FileButton>
                <Line $m={3} />
                <Tool icon={ic.save} label="保存" />
                <Tool icon={ic.output} w={38} label="输出" />
                <Tool icon={ic.print} w={38} label="打印" />
                <Tool icon={ic.preview} w={38} label="预览" />
                <Tool icon={ic.undo} w={48} caret label="撤销" />
                <Tool icon={ic.redo} label="恢复" />
                <Tool icon={ic.more} w={38} label="更多" />
                <Line />
                <ActiveTab>开始</ActiveTab>
                {["插入", "页面布局", "引用", "审阅", "视图", "章节"].map(t => <MenuTab key={t}>{t}</MenuTab>)}
                <MenuTab $wide>开发工具</MenuTab>
                <MenuTab $wide>会员专享</MenuTab>
                <Search>{ic.search}<input aria-label="搜索" placeholder="查找命令、搜索模板" /></Search>
                <MenuRight>
                    <IconText>{ic.cloud}未同步</IconText>
                    <IconText>{ic.person}协作</IconText>
                    <IconText>{ic.share}分享</IconText>
                </MenuRight>
                <MenuEnd>
                    <Line />
                    <Slot $w={50} aria-label="选项"><svg width="4" height="18" viewBox="0 0 4 18" fill="#4d5263"><circle cx="2" cy="2" r="1.500" /><circle cx="2" cy="9" r="1.500" /><circle cx="2" cy="16" r="1.500" /></svg></Slot>
                    <Slot $w={28} aria-label="收起"><svg width="22" height="12" viewBox="0 0 22 12"><path d="M1 11L11 1l10 10" stroke="#4d5263" strokeWidth="1.500" fill="none" /></svg></Slot>
                </MenuEnd>
            </MenuBar>

            <Ribbon>
                <Group $right={6}>
                    <BigRow>
                        <Big $w={83}>
                            <svg width="32" height="36" viewBox="0 0 32 36" fill="none" stroke="#3a3f4b" strokeWidth="1.500"><path d="M12 32H1V4h7M19 4h6v10M8 1h11v5H8z" /><path d="M13 15h18v20H13z" fill="#e1e3e8" /></svg>
                            <BigLabel>粘贴<Caret /></BigLabel>
                        </Big>
                        <div>
                            <Faded>{ic.cut}剪切</Faded>
                            <Faded>{ic.copy}复制</Faded>
                        </div>
                        <Big $w={76}>
                            <svg width="28" height="37" viewBox="0 0 28 37" fill="none" stroke="#3a3f4b" strokeWidth="1.500"><path d="M1 24h26v12H1z" fill="#e1e3e8" /><path d="M1 24v-5c0-3 9-2 9-5V1h8v13c0 3 9 2 9 5v5" /></svg>
                            <BigLabel>格式刷</BigLabel>
                        </Big>
                    </BigRow>
                    <Launcher aria-label="剪贴板" />
                </Group>
                <Group $left={7} $right={5}>
                    <Row>
                        <Combo $w={172} $first><select aria-label="字体"><option>黑体</option></select><Caret /></Combo>
                        <Combo $w={98}><select aria-label="字号"><option>小二</option></select><Caret /></Combo>
                        <Line $m={3} $h={1} />
                        <Tool icon={<LetterIcon d={bigA} mark="M18 5h7M21.500 1.500v7" />} label="增大字号" />
                        <Tool icon={<LetterIcon d={bigA} mark="M18 5h7" />} label="减小字号" />
                        <Tool icon={ic.eraser} w={38} label="清除格式" />
                        <Tool w={50} caret label="拼音" icon={<svg width="26" height="28" viewBox="0 0 26 28" fontFamily="Noto Sans CJK SC" fill="currentColor"><text x="13" y="12" fontSize="12" fontWeight="bold" textAnchor="middle">wén</text><text x="5" y="26" fontSize="15">文</text></svg>} />
                    </Row>
                    <Row>
                        <Tool label="加粗" icon={<svg width="18" height="24" viewBox="0 0 20 26"><path d="M3 2v21h8.500a5.500 5.500 0 0 0 0-11H3h8a5 5 0 0 0 0-10z" stroke="#2b2f3a" strokeWidth="4" fill="none" /></svg>} />
                        <Tool icon={ic.italic} label="倾斜" />
                        <Tool icon={ic.under} w={50} caret label="下划线" />
                        <Tool icon={ic.strike} w={50} caret label="删除线" />
                        <Tool icon={<LetterIcon d={bigX} mark="M19 4c1-4 6-3 5 0-1 2-5 4-5 6h6" />} w={38} label="上标" />
                        <Tool icon={<LetterIcon d={bigX} mark="M19 18c1-4 6-3 5 0-1 2-5 4-5 6h6" />} label="下标" />
                        <Tool icon={ic.outline} w={50} caret label="文字效果" />
                        <Tool icon={ic.marker} w={50} caret label="突出显示" />
                        <Tool icon={ic.color} w={50} caret label="字体颜色" />
                        <Tool icon={ic.boxed} label="字符底纹" />
                    </Row>
                    <Launcher aria-label="字体设置" />
                </Group>
                <Group $left={7} $right={9}>
                    <Row>
                        <Tool icon={ic.bullets} w={50} caret label="项目符号" />
                        <Tool icon={ic.numbers} w={50} caret label="编号" />
                        <Tool icon={ic.outdent} label="减少缩进" />
                        <Tool icon={ic.indent} w={38} label="增加缩进" />
                        <Tool icon={ic.scale} w={50} caret label="中文版式" />
                        <Tool icon={ic.sort} label="排序" />
                        <Tool icon={ic.wrap} w={50} caret label="换行" />
                        <Tool icon={ic.ruler} w={38} label="制表位" />
                    </Row>
                    <Row>
                        <Tool icon={ic.left} label="左对齐" />
                        <Tool icon={ic.center} on label="居中" />
                        <Tool icon={ic.right} w={38} label="右对齐" />
                        <Tool icon={ic.justify} w={38} label="两端对齐" />
                        <Tool icon={ic.distribute} label="分散对齐" />
                        <Line $m={5} />
                        <Tool icon={ic.spacing} w={50} caret label="行距" />
                        <Line $m={5} />
                        <Tool icon={ic.bucket} w={50} caret label="底纹" />
                        <Tool icon={ic.border} w={50} caret label="边框" />
                    </Row>
                    <Launcher aria-label="段落设置" />
                </Group>
                <Gallery>
                    <StyleCell><Preview $size={20}>AaBbCcDd</Preview>正文</StyleCell>
                    <StyleCell $on><Preview $size={29}>AaBbC</Preview>标题 1</StyleCell>
                    <StyleCell><Preview $sans $size={28}>AaBbC</Preview>标题 2</StyleCell>
                    <StyleCell><Preview $bold $size={30}>AaBbC</Preview>标题 3</StyleCell>
                    <GalleryArrows><Caret up /><Caret /><Caret /></GalleryArrows>
                </Gallery>
                <Group $left={5}>
                    <Big $w={116}>
                        <svg width="34" height="34" viewBox="0 0 34 34" fill="none" stroke="#3a3f4b" strokeWidth="1.500"><path d="M1 2h17M1 9h14M1 16h11M16 21l8-19 8 19M19 14h10M16 27h18M16 33h18" /><path d="M1 25h9v8H1z" fill="#e1e3e8" /></svg>
                        <BigLabel>文字排版<Caret /></BigLabel>
                    </Big>
                </Group>
                <Group>
                    <BigRow>
                        <Big $w={116}>
                            <svg width="34" height="34" viewBox="0 0 34 34" stroke="#3a3f4b" strokeWidth="1.500"><circle cx="15" cy="14" r="13" fill="#e6e8ec" /><path d="M24 24l9 9" /></svg>
                            <BigLabel>查找替换<Caret /></BigLabel>
                        </Big>
                        <Big $w={50}>
                            <svg width="24" height="34" viewBox="0 0 24 34" fill="#f3f4f6" stroke="#3a3f4b" strokeWidth="1.500"><path d="M2 2v26l6-6 5 11 4-2-5-10h10z" /></svg>
                            <BigLabel>选择<Caret /></BigLabel>
                        </Big>
                    </BigRow>
                </Group>
            </Ribbon>

            <Workspace>
                <Pages>
                    <Page $h={332}>
                        <FormFigure />
                        <Caption $top={7}>图 5-20 我要当房东界面图</Caption>
                        <Body $indent>我要当房东信息：通过列表可以查看房屋名称、房屋类型、图片、租赁方式、小区、</Body>
                        <Body>月租价格、用户名、房屋详情、朝向楼层、面积、发布日期、联系电话等信息等信息，进</Body>
                        <CutLine>行查看详情或修改、删除操作，如图 5-21 所示。</CutLine>
                    </Page>
                    <Gap />
                    <Page>
                        <Stack>
                            <GlitchFigure />
                            <Overlap>
                                <Caption><Patch>图 5-21 我要当房东界面图</Patch></Caption>
                                <Body $indent>我的收藏管理：通过列表可以查看收藏名称、收藏图片等信息等信息，进行查看详情</Body>
                            </Overlap>
                        </Stack>
                    </Page>
                </Pages>
                <Side>
                    <Collapse aria-label="收起"><svg width="20" height="18" viewBox="0 0 20 18" fill="none" stroke="#555" strokeWidth="1.500"><path d="M2 11v-2l8-8 8 8v2zM1 17h18" /></svg></Collapse>
                    <SideCard>
                        <SideIcon $bg="#8b88fb"><Icon s={26} c="#fff"><path d="M12 22.500H1.500v-21h20V13M5 6h13M5 10h11M5 14h6M5 18h5" /><circle cx="17" cy="17.500" r="4" /><path d="M20 20.500l3 3" /></Icon></SideIcon>
                        论文查重
                    </SideCard>
                    <SideCard>
                        <SideIcon $bg="#35a6ed"><Icon s={26} c="#fff"><path d="M11 22.500H2.500v-21H16l4 4V12M16 2v4h4M6 9h9M6 13h8M6 17h4M13.500 23l4.500-11 4.500 11M15 19.500h6" /></Icon></SideIcon>
                        论文排版
                    </SideCard>
                </Side>
                <Track><ScrollDrawing /></Track>
            </Workspace>

            <Status>
                <span>页面: 29/37</span>
                <span>字数: 12099</span>
                <IconText $tight>{ic.spell}拼写检查</IconText>
                <IconText $tight>{ic.proof}文档校对</IconText>
                <span>兼容模式</span>
                <StatusRight>
                    <Tool icon={ic.eye} w={50} label="护眼模式" />
                    <Line $m={7} $h={20} />
                    <Tool icon={ic.pageView} on label="页面视图" />
                    <Tool icon={ic.outlineView} w={40} label="大纲" />
                    <Tool icon={ic.book} w={38} label="阅读版式" />
                    <Tool icon={ic.globe} w={40} label="Web版式" />
                    <Tool icon={ic.pen} w={38} label="写作模式" />
                    <Line $m={10} $h={20} />
                    <Tool icon={ic.fit} w={38} label="适合页面" />
                    <Percent>100%</Percent><Caret />
                    <Slot $w={50} aria-label="缩小"><svg width="15" height="3" viewBox="0 0 15 3"><path d="M0 0h15v3H0z" fill="#3a3f4b" /></svg></Slot>
                    <Zoom type="range" aria-label="缩放" value={zoom} onChange={e => setZoom(e.target.value)} />
                    <svg width="12" height="12" viewBox="0 0 12 12"><path d="M6 0v12M0 6h12" stroke="#3a3f4b" strokeWidth="2.500" /></svg>
                </StatusRight>
            </Status>

            <Taskbar>
                <Task $w={72} aria-label="开始"><svg width="25" height="25" viewBox="0 0 25 25" fill="#fff"><path d="M0 4l11-2v10H0zM12 2l13-2v12H12zM0 13h11v10L0 21zM12 13h13v12l-13-2z" /></svg></Task>
                <Task $w={78} aria-label="搜狗">
                    <svg width="36" height="36" viewBox="0 0 36 36" fill="#fff">
                        {[0, 72, 144, 216, 288].map(a => <path key={a} transform={`rotate(${a} 18 18)`} d="M17 16C9 15 6 9 9 4c3-4 9-4 12-1-5 3-6 8-4 13z" />)}
                    </svg>
                </Task>
                <Task $w={80} aria-label="IE">
                    <svg width="36" height="36" viewBox="0 0 36 36" fill="none"><path d="M30 24A12 12 0 1 1 31 19H9" stroke="#45bdf0" strokeWidth="6" /><path d="M4 33C-4 24 22-1 33 3c4 3-1 9-2 10M4 33c3 3 8 0 10-2" stroke="#f2c227" strokeWidth="2.500" /></svg>
                </Task>
                <Task $w={76} aria-label="浏览器">
                    <svg width="34" height="36" viewBox="0 0 34 36" fill="none"><circle cx="17" cy="18" r="15.500" fill="#4fb52c" stroke="#e8f6df" strokeWidth="2" /><path d="M25 23a9 9 0 1 1 1-5H9" stroke="#fff" strokeWidth="4" /><path d="M3 34C-2 22 14 1 31 1" stroke="#3c9e22" strokeWidth="2" /></svg>
                </Task>
                <Task $w={75} $open aria-label="文件资源管理器">
                    <svg width="34" height="28" viewBox="0 0 34 28"><path d="M1 1h13l3 3h16v23H1z" fill="#d9a11c" /><path d="M1 6h32v21H1z" fill="#fbd56c" /><path d="M7 27V14h21v13h-6v-7h-9v7z" fill="#3d8ecb" /></svg>
                </Task>
                <Task $w={75} $open aria-label="录屏">
                    <svg width="36" height="36" viewBox="0 0 36 36"><circle cx="18" cy="18" r="18" fill="#e2600d" /><circle cx="18" cy="18" r="15" fill="#f37a1c" /><path d="M9 6l5 4h8l5-4 1 11c-2 9-18 9-20 0z" fill="#120c0a" /><path d="M9 6l2 7 4-3zM27 6l-2 7-4-3z" fill="#fff" /><path d="M14 24h8v7h-8z" fill="#120c0a" /><path d="M17 25h2v4h-2z" fill="#fff" /><path d="M7 14h22v3H7z" fill="#f8cfae" /><ellipse cx="13" cy="16" rx="3.500" ry="2.500" fill="#e65a0c" stroke="#f8cfae" /><ellipse cx="23" cy="16" rx="3.500" ry="2.500" fill="#e65a0c" stroke="#f8cfae" /></svg>
                </Task>
                <Task $w={74} $on $open aria-label="WPS">
                    <svg width="36" height="28" viewBox="0 0 36 28"><path d="M0 1h20l-3 6h-8l4 13 6-19h6l-9 26H9z" fill="#f3231f" /><path d="M20 27L29 1h7l-8 26h-8l-3-8 4-6z" fill="#f3231f" /><path d="M17 19l4-14 3-4h3l-8 24z" fill="#ff704f" /></svg>
                </Task>
                <Tray>
                    <Temp>
                        <span>68℃<br />CPU温度</span>
                        <svg width="36" height="26" viewBox="0 0 36 26" fill="none" stroke="#fff" strokeWidth="2"><path d="M2 4h30v4H2zM3 8v16h14V10H5M8 13h6v7H8zM20 10h8v10h-8zM20 24h14V8" /></svg>
                    </Temp>
                    {bandeja.map((el, i) => <Task key={i} $w={36}>{el}</Task>)}
                    <Task $w={48} aria-label="输入法">
                        <Icon w={3}><rect width="24" height="24" rx="4" fill="#3989f5" stroke="none" /><circle cx="12" cy="11.500" r="6" stroke="#fff" /><path d="M14 14l3 4" stroke="#fff" /><circle cx="19" cy="18" r="1" fill="#6ee06a" stroke="none" /></Icon>
                    </Task>
                    <Clock>9:16 周二<br />2021/8/24</Clock>
                    <Task $w={54} aria-label="通知">
                        <svg width="24" height="24" viewBox="0 0 24 24" fill="none" stroke="#fff" strokeWidth="1.500"><path d="M4 1h19v22H4zM4 5H1v18h4M8 7h11M8 12h11M8 17h6" /></svg>
                    </Task>
                    <Edge />
                </Tray>
            </Taskbar>

            <FloatBall>
                <svg width="76" height="78" viewBox="0 0 76 78" fill="none">
                    <circle cx="38" cy="40" r="36.500" fill="#f6f8fd" stroke="#3c8df0" strokeWidth="3" />
                    <path d="M10 64c16 14 40 14 56-4z" fill="#cfe0f6" /><path d="M10 62h16v10h-6z" fill="#a9c1ea" />
                    <path d="M27 32h16v8H27z" fill="#d7d8dc" />
                    <path d="M43 8h14v12H43zM57 28h10v20H57z" fill="#e9ebf3" />
                    <path d="M11 48h57v12H11z" fill="#bdbec1" /><path d="M11 52h57v3H11z" fill="#98999c" />
                    <path d="M3 48v14M-3 55h13" stroke="#3a3f4b" strokeWidth="2.500" />
                </svg>
            </FloatBall>
        </Janela>
    )
}

export default App
